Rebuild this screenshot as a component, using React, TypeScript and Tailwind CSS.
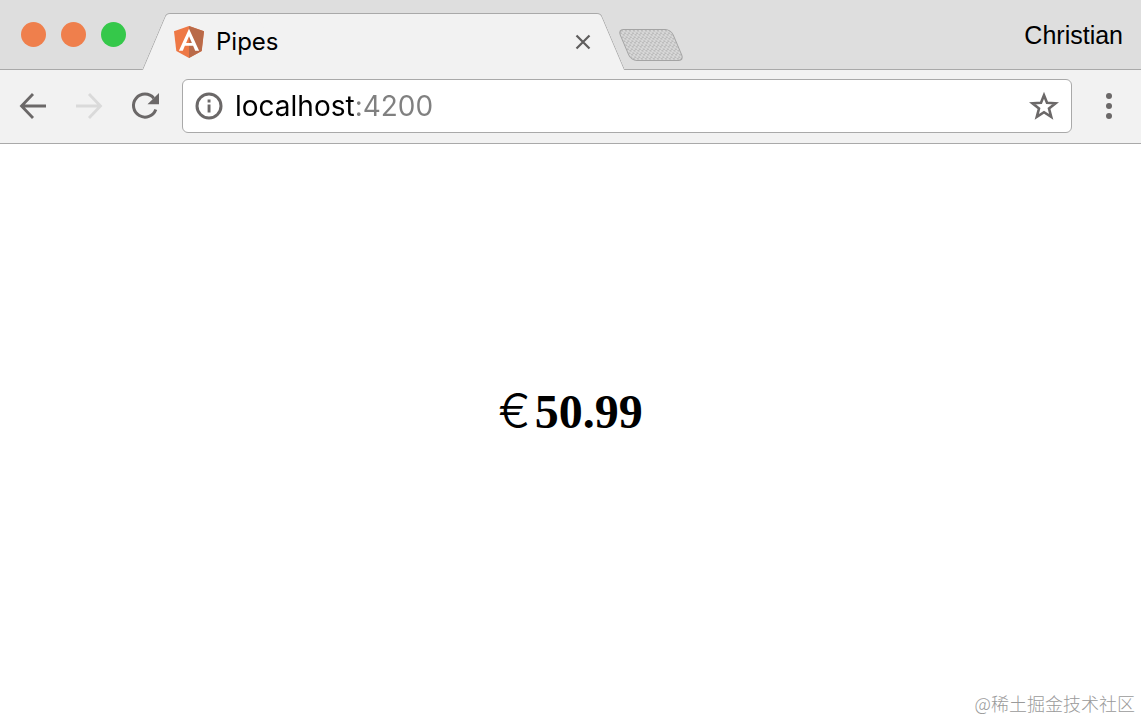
import { ReactNode, useState } from "react";

const Logo = () => (
  <svg viewBox="0 0 30 32" className="h-8 w-[30px] shrink-0" aria-hidden="true">
    <path d="M15 0 0 5.3 2.3 25 15 32l12.7-7L30 5.3z" fill="#ee7845" />
    <path d="M15 0v32l12.7-7L30 5.3z" fill="#b96a49" />
    <path
      d="M15 2.8 4.900 24.800h3.900l2.100-5h8.200l2.100 5h3.900zm0 7.400 2.900 6.700h-5.800z"
      fill="#fff"
    />
  </svg>
);

const ToolButton = ({
  label,
  disabled,
  children,
}: {
  label: string;
  disabled?: boolean;
  children: ReactNode;
}) => (
  <button
    type="button"
    aria-label={label}
    disabled={disabled}
    className="shrink-0 text-[#6b6868] disabled:text-[#dadada]"
  >
    {children}
  </button>
);

const Tab = ({ title }: { title: string }) => (
  <div className="relative z-10 ml-7 -mb-px flex h-[57px] w-[458px] shrink-0 items-center px-5">
    {/* slanted edges */}
    <span className="absolute inset-y-0 left-0 w-3/4 -skew-x-[23deg] rounded-tl-sm border-t border-l border-[#a9a9a9] bg-[#f2f2f2]" />
    <span className="absolute inset-y-0 right-0 w-3/4 skew-x-[23deg] rounded-tr-sm border-t border-r border-[#a9a9a9] bg-[#f2f2f2]" />
    <div className="relative flex flex-1 items-center">
      <Logo />
      <span className="ml-3 flex-1 text-2xl text-black">{title}</span>
      <button type="button" aria-label="Close tab" className="text-[#5f5d5d]">
        <svg viewBox="0 0 18 18" className="size-[18px]">
          <path d="m2.500 2.500 13 13m0-13-13 13" stroke="currentColor" strokeWidth="2.200" />
        </svg>
      </button>
    </div>
  </div>
);

function App() {
  const [url, setUrl] = useState("localhost:4200");

  return (
    <div className="flex min-h-screen flex-col bg-white font-['Inter',sans-serif]">
      <header>
        <div className="flex h-[70px] items-end border-b border-[#a9a9a9] bg-[#dedede] pr-[18px] pl-[21px]">
          <div className="mb-[22px] flex shrink-0 gap-[15px]">
            <span className="size-[25px] rounded-full bg-[#ef7f4c]" />
            <span className="size-[25px] rounded-full bg-[#ef7f4c]" />
            <span className="size-[25px] rounded-full bg-[#35c84a]" />
          </div>
          <Tab title="Pipes" />
          <button
            type="button"
            aria-label="New tab"
            className="mb-2 ml-3 h-8 w-[54px] shrink-0 skew-x-[23deg] rounded-md border border-[#a4a4a4] bg-[#d6d6d6] bg-[conic-gradient(#bcbcbc_25%,#d8d8d8_0_50%,#bcbcbc_0_75%,#d8d8d8_0)] bg-[size:4px_4px]"
          />
          <button
            type="button"
            className="mb-[18px] ml-auto font-['Liberation_Sans',sans-serif] text-[25px] leading-8 text-black"
          >
            Christian
          </button>
        </div>

        <div className="flex h-[74px] items-center border-b border-[#a9a9a9] bg-[#f2f2f2] pr-[29px] pb-[2px] pl-[18px]">
          <nav className="flex items-center gap-[26px]">
            <ToolButton label="Back">
              <svg viewBox="0 0 30 30" className="size-[30px]" fill="none" stroke="currentColor" strokeWidth="2.800">
                <path d="M28 15H4M15 3 3.500 15 15 27" />
              </svg>
            </ToolButton>
            <ToolButton label="Forward" disabled>
              <svg viewBox="0 0 30 30" className="size-[30px]" fill="none" stroke="currentColor" strokeWidth="2.800">
                <path d="M2 15h24M15 3l11.500 12L15 27" />
              </svg>
            </ToolButton>
            <ToolButton label="Reload">
              <svg viewBox="0 0 30 30" className="size-[30px]">
                <path
                  d="M23.800 7.200A11.500 11.500 0 1 0 25.800 18.500"
                  fill="none"
                  stroke="currentColor"
                  strokeWidth="3"
                />
                <path d="M29 2v11.200H17.500z" fill="currentColor" />
              </svg>
            </ToolButton>
          </nav>

          <form
            className="ml-[22px] flex h-[54px] min-w-0 flex-1 items-center rounded-md border border-[#a9a9a9] bg-white px-3"
            onSubmit={(e) => e.preventDefault()}
          >
            <svg viewBox="0 0 28 28" className="size-7 shrink-0 text-[#6b6868]" aria-hidden="true">
              <circle cx="14" cy="14" r="12" fill="none" stroke="currentColor" strokeWidth="3" />
              <path d="M12.600 7.500h2.900v2.900h-2.900zM12.600 12.500h2.900v8h-2.900z" fill="currentColor" />
            </svg>
            {/* host in black, port in grey */}
            <input
              type="text"
              aria-label="Address"
              value={url}
              onChange={(e) => setUrl(e.target.value)}
              className="ml-3 min-w-0 flex-1 bg-[linear-gradient(90deg,#000_121px,#808080_121px)] bg-clip-text text-[28px] leading-9 text-transparent caret-black outline-none"
            />
            <ToolButton label="Bookmark this page">
              <svg viewBox="0 0 30 30" className="size-[30px]">
                <path
                  d="m15 4.200 3 7.600 8.600.5-6.600 5.300 2.200 8.200-7.200-4.600-7.200 4.600L10 17.600l-6.600-5.300 8.600-.5z"
                  fill="none"
                  stroke="currentColor"
                  strokeWidth="2.600"
                />
              </svg>
            </ToolButton>
          </form>

          <div className="ml-[34px] flex">
            <ToolButton label="Menu">
              <svg viewBox="0 0 6 28" className="h-7 w-[6px]" fill="currentColor">
                <circle cx="3" cy="4" r="3" />
                <circle cx="3" cy="14" r="3" />
                <circle cx="3" cy="24" r="3" />
              </svg>
            </ToolButton>
          </div>
        </div>
      </header>

      <main className="flex flex-1 items-center justify-center pb-3">
        <h1 className="flex items-baseline gap-1 font-['Liberation_Serif',serif] text-5xl font-bold text-black">
          <span className="font-['Inter',sans-serif] font-light">€</span>
          <span>50.99</span>
        </h1>
      </main>

      <footer className="pr-[6px] pb-[6px] text-right font-['Noto_Sans_CJK_SC',sans-serif] text-lg leading-6 font-light text-[#9a9a9a]">
        @稀土掘金技术社区
      </footer>
    </div>
  );
}

export default App;
